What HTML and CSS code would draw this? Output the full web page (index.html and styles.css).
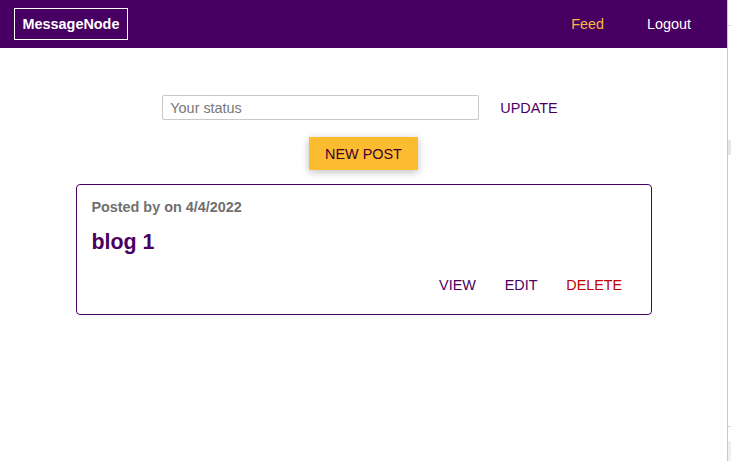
FILE: index.html
```html
<!DOCTYPE html>
<html lang="en">
<head>
<meta charset="utf-8">
<title>MessageNode</title>
<link rel="stylesheet" href="styles.css">
</head>
<body>
<div class="window">
  <div class="app">
    <header class="main-header">
      <div class="logo">MessageNode</div>
      <nav class="nav">
        <a class="nav-item nav-item--active">Feed</a>
        <a class="nav-item">Logout</a>
      </nav>
    </header>
    <main class="feed">
      <form class="status-form">
        <input class="status-input" type="text" placeholder="Your status">
        <button type="button" class="btn btn--flat btn--update">UPDATE</button>
      </form>
      <div class="control">
        <button type="button" class="btn btn--raised">NEW POST</button>
      </div>
      <article class="post">
        <p class="post-meta">Posted by on 4/4/2022</p>
        <h1 class="post-title">blog 1</h1>
        <div class="post-actions">
          <button type="button" class="btn btn--flat">VIEW</button>
          <button type="button" class="btn btn--flat">EDIT</button>
          <button type="button" class="btn btn--flat btn--danger">DELETE</button>
        </div>
      </article>
    </main>
  </div>
  <div class="scroll-strip">
    <div class="strip-tick strip-tick--top"></div>
    <div class="strip-block"></div>
    <div class="strip-fill"></div>
    <div class="strip-tick"></div>
    <div class="strip-bottom"></div>
  </div>
</div>
</body>
</html>
```

FILE: styles.css
```css
* {
  box-sizing: border-box;
}

html, body {
  margin: 0;
  padding: 0;
  height: 100%;
  background: #ffffff;
}

body {
  font-family: "Liberation Sans", Arial, sans-serif;
  font-size: 14.4px;
}

.window {
  display: flex;
  height: 461px;
  overflow: hidden;
}

.app {
  width: 727px;
  flex: none;
}

.scroll-strip {
  flex: 1;
  border-left: 1px solid #c9c9c9;
  display: flex;
  flex-direction: column;
}

.strip-tick {
  height: 1px;
  background: #d6d6d6;
}

.strip-tick--top {
  margin-top: 25px;
}

.strip-block {
  height: 15px;
  margin-top: 114px;
  background: #e6e6e6;
}

.strip-fill {
  flex: 1;
}

.strip-bottom {
  height: 20px;
  margin-top: 14px;
  background: #eef0f2;
}

.main-header {
  height: 48px;
  background: #470062;
  display: flex;
  align-items: center;
  justify-content: space-between;
  padding: 0 36px 0 14px;
}

.logo {
  border: 1px solid #ffffff;
  color: #ffffff;
  font-weight: bold;
  font-size: 14.4px;
  line-height: 16px;
  padding: 7px 0;
  width: 114px;
  height: 32px;
  margin-top: -1px;
  text-align: center;
}

.nav {
  display: flex;
  gap: 43px;
}

.nav-item {
  color: #ffffff;
  font-size: 14.4px;
  line-height: 16px;
  text-decoration: none;
}

.nav-item--active {
  color: #fab83f;
}

.feed {
  display: flex;
  flex-direction: column;
  align-items: center;
}

.status-form {
  margin-top: 47px;
  display: flex;
  align-items: center;
  height: 25px;
}

.status-input {
  width: 317px;
  height: 25px;
  border: 1px solid #c8c8c8;
  border-radius: 2px;
  padding: 0 7px;
  font-family: "Liberation Sans", Arial, sans-serif;
  font-size: 14.4px;
  color: #333;
  outline: none;
}

.status-input::placeholder {
  color: #777777;
}

.btn {
  font-family: "Liberation Sans", Arial, sans-serif;
  font-size: 14.4px;
  line-height: 16px;
  border: none;
  background: transparent;
  padding: 7px 14.4px;
  cursor: pointer;
  margin: 0;
}

.btn--flat {
  color: #4a0063;
}

.btn--danger {
  color: #c00000;
}

.btn--update {
  margin-left: 14px;
  padding: 7px 7px;
}

.control {
  margin-top: 17px;
}

.btn--raised {
  background: #fbbc2f;
  color: #3d0030;
  height: 33px;
  padding: 0 16px;
  box-shadow: 0 2px 8px rgba(0, 0, 0, 0.26);
}

.post {
  margin-top: 14px;
  margin-left: 1px;
  width: 576px;
  border: 1px solid #4a0063;
  border-radius: 4px;
  padding: 14.4px 14.4px 13.4px;
}

.post-meta {
  margin: 0;
  font-size: 14.4px;
  line-height: 16px;
  font-weight: bold;
  color: #707070;
}

.post-title {
  margin: 16px 0 0;
  font-size: 21.4px;
  line-height: 23px;
  font-weight: bold;
  color: #4a0063;
}

.post-actions {
  margin-top: 16px;
  display: flex;
  justify-content: flex-end;
}
```
